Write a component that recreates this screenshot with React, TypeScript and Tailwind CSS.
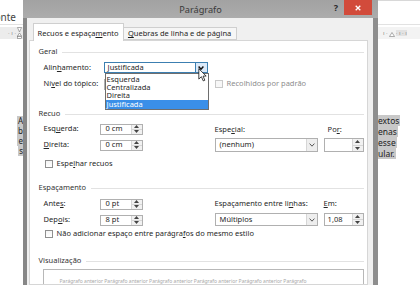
import React from "react";

function U({ children }: { children: React.ReactNode }) {
  return <span className="underline underline-offset-[1px] decoration-[0.6px]">{children}</span>;
}

const Chevron = ({ bold }: { bold?: boolean }) => (
  <svg width="6" height="4" viewBox="0 0 6 4">
    <path d="M0.6 0.6 L3 3.2 L5.4 0.6" fill="none" stroke={bold ? "#111" : "#444"} strokeWidth={bold ? 1.5 : 0.9} />
  </svg>
);

const SpinArrows = () => (
  <div className="w-[11px] flex flex-col bg-[#f1f1f1] border-l border-[#d6d6d6]">
    <div className="flex-1 flex items-center justify-center border-b border-[#d6d6d6]">
      <svg width="5" height="3" viewBox="0 0 5 3"><path d="M0 3 L2.5 0 L5 3Z" fill="#444" /></svg>
    </div>
    <div className="flex-1 flex items-center justify-center">
      <svg width="5" height="3" viewBox="0 0 5 3"><path d="M0 0 L2.5 3 L5 0Z" fill="#444" /></svg>
    </div>
  </div>
);

const Spin = ({ value, big }: { value: string; big?: boolean }) => (
  <div className={big ? "flex h-[14px] w-[40px] border border-[#b0b0b0] bg-white" : "flex h-[11px] w-[43px] border border-[#b0b0b0] bg-white"}>
    <div className={big ? "flex-1 flex items-center pl-[3px]" : "flex-1 flex items-center pl-[5px]"}>{value}</div>
    <SpinArrows />
  </div>
);

const Select = ({ value, className }: { value: string; className: string }) => (
  <div className={"flex border border-[#b0b0b0] bg-white " + className}>
    <div className="flex-1 flex items-center pl-[4px]">{value}</div>
    <div className="w-[11px] flex items-center justify-center bg-[#eeeeee] border-l border-[#d6d6d6]">
      <Chevron />
    </div>
  </div>
);

const Check = ({ disabled }: { disabled?: boolean }) => (
  <div
    className={
      disabled
        ? "w-[8px] h-[8px] border border-[#c9c9c9] bg-[#f7f7f7] shrink-0"
        : "w-[8px] h-[8px] border border-[#8f8f8f] bg-gradient-to-b from-[#f4f4f4] to-white shrink-0"
    }
  />
);

const Section = ({ title, className }: { title: string; className: string }) => (
  <div className={"flex items-center h-[10px] " + className}>
    <span className="text-[#333]">{title}</span>
    <div className="flex-1 h-px bg-[#e2e2e2] ml-[5px]" />
  </div>
);

function Dialog() {
  return (
    <div className="w-[355px] h-[285px] flex flex-col shrink-0">
      {/* title bar */}
      <div className="h-[18px] shrink-0 grid grid-cols-[1fr_auto_1fr] bg-gradient-to-b from-[#a2a2a2] to-[#acacac]">
        <div />
        <div className="flex items-center pt-[2px] text-[9.2px] text-[#3a3a3a]">Parágrafo</div>
        <div className="flex justify-end items-start">
          <div className="h-[14px] flex items-center text-[9px] font-bold text-[#2a2a2a] mr-[6px]">?</div>
          <div className="w-[28px] h-[15px] bg-[#d24b3b] flex items-center justify-center mr-[6px]">
            <svg width="6" height="6" viewBox="0 0 6 6">
              <path d="M0.7 0.7 L5.3 5.3 M5.3 0.7 L0.7 5.3" stroke="#fff" strokeWidth="1.3" />
            </svg>
          </div>
        </div>
      </div>
      {/* body row */}
      <div className="flex-1 flex min-h-0">
        <div className="w-[4px] bg-[#878787]" />
        <div className="flex-1 bg-[#f0f0f0] pl-[2px] pr-[5px] pt-[6px] flex flex-col min-h-0">
          {/* tabs */}
          <div className="h-[17px] shrink-0 flex items-end pl-[4px] relative z-10 -mb-px">
            <div className="w-[91px] h-[18px] pt-[2px] bg-white border border-b-0 border-[#cfcfcf] flex items-center justify-center text-[#1e1e1e]">
              Recuos e espaça<U>m</U>ento
            </div>
            <div className="w-[113px] h-[13px] mb-px pt-[1px] bg-[#f6f6f6] border border-l-0 border-[#cfcfcf] flex items-center justify-center text-[#1e1e1e]">
              <U>Q</U>uebras de linha e de página
            </div>
          </div>
          {/* panel */}
          <div className="flex-1 border border-[#d6d6d6] bg-white pl-[9px] pr-[3px] flex flex-col min-h-0 overflow-hidden text-[#262626] *:shrink-0">
            <Section title="Geral" className="mt-[6px]" />
            {/* Alinhamento */}
            <div className="flex items-center h-[11px] mt-[5px] pl-[5px] relative z-20">
              <div className="w-[60px]">Alin<U>h</U>amento:</div>
              <div className="relative w-[104px] h-[11px] flex border border-[#3c7fb1] bg-white">
                <div className="flex-1 flex items-center pl-[3px]">Justificada</div>
                <div className="w-[12px] flex items-center justify-center bg-[#dbeafa] border-l border-[#3c7fb1]">
                  <Chevron bold />
                </div>
                {/* open list */}
                <div className="absolute left-0 top-[10px] w-[104px] h-[37px] bg-white border border-[#6e6e6e] pt-[1.5px] flex flex-col">
                  <div className="h-[8.3px] flex items-center pl-[1px]">Esquerda</div>
                  <div className="h-[8.3px] flex items-center pl-[1px]">Centralizada</div>
                  <div className="h-[8.3px] flex items-center pl-[1px]">Direita</div>
                  <div className="h-[8.3px] flex items-center pl-[1px] bg-[#3a8fe8] text-white">Justificada</div>
                </div>
              </div>
            </div>
            {/* Nível */}
            <div className="flex items-center h-[12px] mt-[5px] pl-[5px]">
              <div className="w-[60px]">Ní<U>v</U>el do tópico:</div>
              <div className="w-[104px] h-[11px] border border-[#b0b0b0] bg-white" />
              <div className="ml-[7px] flex items-center">
                <Check disabled />
                <span className="ml-[4px] text-[#8d8d8d]">Recolhidos por padrão</span>
              </div>
            </div>

            <Section title="Recuo" className="mt-[19px]" />
            <div className="flex pl-[5px]">
              <div className="w-[171px] flex flex-col">
                <div className="flex items-center h-[12px] mt-[4px]">
                  <div className="w-[56px]">Esq<U>u</U>erda:</div>
                  <Spin value="0 cm" />
                </div>
                <div className="flex items-center h-[12px] mt-[4px]">
                  <div className="w-[56px]"><U>D</U>ireita:</div>
                  <Spin value="0 cm" />
                </div>
                <div className="flex items-center h-[8px] mt-[9px] pl-[1px]">
                  <Check />
                  <span className="ml-[4px]">Espe<U>l</U>har recuos</span>
                </div>
              </div>
              <div className="w-[103px] flex flex-col">
                <div className="h-[10px] mt-[6px] flex items-center">Espe<U>c</U>ial:</div>
                <Select value="(nenhum)" className="h-[14px] mt-[3px]" />
              </div>
              <div className="ml-[6px] w-[40px] flex flex-col">
                <div className="h-[10px] mt-[6px] flex items-center pl-[4px]">Po<U>r</U>:</div>
                <div className="mt-[3px]"><Spin value="" big /></div>
              </div>
            </div>

            <Section title="Espaçamento" className="mt-[15px]" />
            <div className="flex pl-[5px]">
              <div className="w-[171px] flex flex-col">
                <div className="flex items-center h-[12px] mt-[5px]">
                  <div className="w-[56px]">Ante<U>s</U>:</div>
                  <Spin value="0 pt" />
                </div>
                <div className="flex items-center h-[12px] mt-[4px]">
                  <div className="w-[56px]">Dep<U>o</U>is:</div>
                  <Spin value="8 pt" />
                </div>
              </div>
              <div className="w-[103px] flex flex-col">
                <div className="h-[10px] mt-[6px] flex items-center">Espaçamento entre li<U>n</U>has:</div>
                <Select value="Múltiplos" className="h-[13px] mt-[4px]" />
              </div>
              <div className="ml-[6px] w-[40px] flex flex-col">
                <div className="h-[10px] mt-[6px] flex items-center"><U>E</U>m:</div>
                <div className="mt-[4px] flex h-[13px] w-[40px] border border-[#b0b0b0] bg-white">
                  <div className="flex-1 flex items-center pl-[3px]">1,08</div>
                  <SpinArrows />
                </div>
              </div>
            </div>
            <div className="flex items-center h-[9px] mt-[3px] pl-[6px]">
              <Check />
              <span className="ml-[4px]">Não adicionar espaço entre parágra<U>f</U>os do mesmo estilo</span>
            </div>

            <Section title="Visualização" className="mt-[18px]" />
            <div className="ml-[4px] mt-[3px] w-[321px] h-[40px] border border-[#b8b8b8] bg-white pt-[9px] pl-[16px] text-[5px] text-[#a8a8a8] whitespace-nowrap overflow-hidden">
              Parágrafo anterior Parágrafo anterior Parágrafo anterior Parágrafo anterior Parágrafo anterior Parágrafo
            </div>
          </div>
        </div>
        <div className="w-[6px] bg-[#8e8e8e]" />
      </div>
    </div>
  );
}

function LeftDoc() {
  return (
    <div className="w-[23px] h-[285px] flex flex-col bg-white shrink-0 overflow-hidden">
      <div className="h-[25px] shrink-0 flex items-end justify-end pr-[7px] pb-[2px] whitespace-nowrap text-[10px] text-[#444] border-b border-[#e2e2e2]">
        Fonte
      </div>
      <div className="h-[12px] shrink-0 mt-[2px] bg-[#ececec] flex items-center justify-end pr-[1px] text-[6px] text-[#888] whitespace-nowrap">
        <span>· ı ·</span>
        <svg width="5" height="12" viewBox="0 0 5 12" className="ml-[1px]">
          <path d="M0.5 0.5 H4.5 L2.5 5 Z M2.5 6 L4.5 9 H0.5 Z" fill="#fff" stroke="#777" strokeWidth="0.6" />
          <rect x="0.5" y="9.5" width="4" height="2" fill="#fff" stroke="#777" strokeWidth="0.6" />
        </svg>
      </div>
      <div className="mt-[77px] flex flex-col items-end text-[8px] leading-[10px] text-[#222]">
        <span className="bg-[#c8c8c8] pl-[1px]">A</span>
        <span className="bg-[#c8c8c8] pl-[1px]">b</span>
        <span className="bg-[#c8c8c8] pl-[1px]">e</span>
        <span className="bg-[#c8c8c8] pl-[1px]">s</span>
      </div>
    </div>
  );
}

function RightDoc() {
  return (
    <div className="w-[42px] h-[285px] flex flex-col bg-white shrink-0 overflow-hidden">
      <div className="h-[25px] shrink-0 border-t border-[#d8d8d8] border-b border-b-[#e2e2e2]" />
      <div className="h-[12px] shrink-0 mt-[2px] bg-[#f3f3f3] flex items-center pl-[5px] text-[6px] text-[#888] whitespace-nowrap">
        <span>ı ·</span>
        <svg width="6" height="5" viewBox="0 0 6 5" className="mx-[1px] mt-[3px]">
          <path d="M0.5 4.5 L3 0.5 L5.5 4.5 Z" fill="#fff" stroke="#777" strokeWidth="0.6" />
        </svg>
        <span className="bg-[#e2e2e2]">· ı · ı</span>
      </div>
      <div className="mt-[76px] flex flex-col items-start text-[8.5px] leading-[11px] text-[#222]">
        <span className="bg-[#c8c8c8] pr-[1px]">extos</span>
        <span className="bg-[#c8c8c8] pr-[1px]">enas</span>
        <span className="bg-[#c8c8c8] pr-[1px]">esse</span>
        <span className="bg-[#c8c8c8] pr-[1px]">ular.</span>
      </div>
    </div>
  );
}

export default function App() {
  return (
    <div className="relative w-[420px] h-[285px] overflow-hidden flex bg-white font-['Noto_Sans',sans-serif] text-[7.5px] leading-none">
      <LeftDoc />
      <Dialog />
      <RightDoc />
      <svg width="9" height="14" viewBox="0 0 12 19" className="absolute left-[198px] top-[68px] z-30">
        <path d="M1 1 L1 15 L4.5 11.8 L7 17.5 L9.2 16.6 L6.8 11 L11 11 Z" fill="#fff" stroke="#000" strokeWidth="1" strokeLinejoin="round" />
      </svg>
    </div>
  );
}
